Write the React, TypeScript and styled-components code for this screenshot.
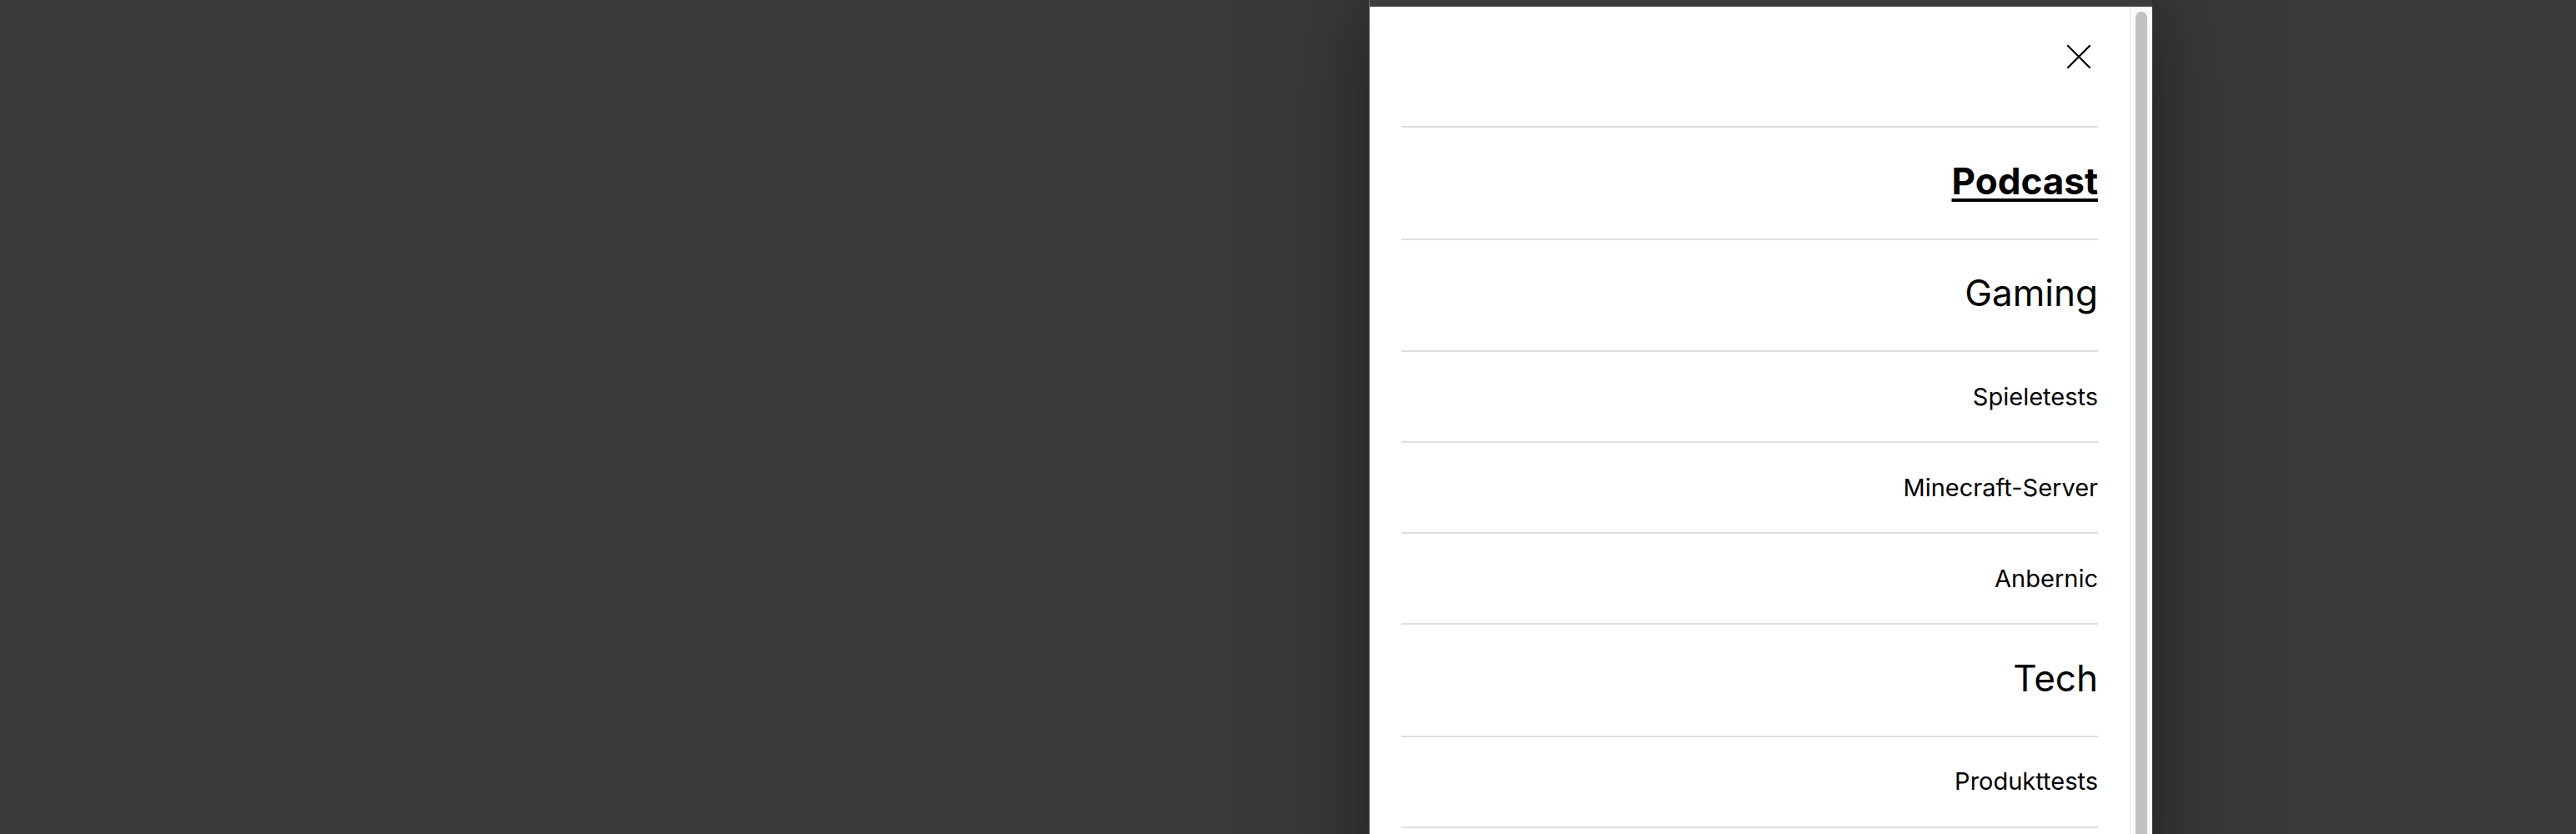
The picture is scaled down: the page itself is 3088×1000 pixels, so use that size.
import React from "react";
import styled, { createGlobalStyle } from "styled-components";

const GlobalStyle = createGlobalStyle`
  *, *::before, *::after { box-sizing: border-box; }
  html, body { margin: 0; padding: 0; }
  body {
    background: #3a3a3a;
    font-family: Inter, "Noto Sans", "DejaVu Sans", sans-serif;
    color: #000;
  }
`;

const Page = styled.div`
  height: 100vh;
  overflow: hidden;
  display: flex;
  justify-content: flex-end;
  align-items: flex-start;
  padding-right: 508px;
  background: #3a3a3a;
`;

const Drawer = styled.aside`
  width: 939px;
  height: 1100px;
  display: flex;
  flex-direction: column;
  background: #fff;
  border-left: 1px solid #6c6c6c;
  box-shadow: 0 0 110px rgba(0, 0, 0, 0.5);
`;

const TopStrip = styled.div`
  flex: 0 0 8px;
  background: #3c3c3c;
`;

const DrawerBody = styled.div`
  flex: 1 1 auto;
  display: flex;
  min-height: 0;
`;

const Content = styled.div`
  flex: 1 1 auto;
  min-width: 0;
  overflow: hidden;
  padding: 0 38px;
  background: #fff;
`;

const ScrollTrack = styled.div`
  flex: 0 0 27px;
  display: flex;
  padding: 6px 6px 0 6px;
  background: #fafafa;
  border-left: 1px solid #e6e6e6;
`;

const ScrollThumb = styled.div`
  flex: 1 1 auto;
  background: #c1c1c1;
  border-radius: 7px;
`;

const Header = styled.div`
  height: 143px;
  display: flex;
  justify-content: flex-end;
  align-items: flex-start;
  padding-top: 37px;
`;

const CloseButton = styled.button`
  width: 46px;
  height: 46px;
  display: flex;
  align-items: center;
  justify-content: center;
  padding: 0;
  margin: 0;
  border: none;
  background: transparent;
  cursor: pointer;
  color: #000;
`;

const NavList = styled.ul`
  list-style: none;
  margin: 0;
  padding: 0;
  border-bottom: 2px solid #dedede;
`;

const NavItem = styled.li<{ $level: "main" | "sub" }>`
  border-top: 2px solid #dedede;
  min-height: ${(p) => (p.$level === "main" ? "134.5px" : "109px")};
  display: flex;
  align-items: center;
  justify-content: flex-end;
  padding-bottom: ${(p) => (p.$level === "main" ? "4px" : "0")};
`;

const NavLink = styled.a<{ $level: "main" | "sub"; $active?: boolean }>`
  color: #000;
  text-decoration: ${(p) => (p.$active ? "underline" : "none")};
  text-decoration-thickness: 3.5px;
  text-underline-offset: 5px;
  font-size: ${(p) => (p.$level === "main" ? "44px" : "29px")};
  font-weight: ${(p) => (p.$active ? 700 : 400)};
  line-height: 1.21;
  text-align: right;
`;

type Item = { label: string; level: "main" | "sub"; active?: boolean };

const items: Item[] = [
  { label: "Podcast", level: "main", active: true },
  { label: "Gaming", level: "main" },
  { label: "Spieletests", level: "sub" },
  { label: "Minecraft-Server", level: "sub" },
  { label: "Anbernic", level: "sub" },
  { label: "Tech", level: "main" },
  { label: "Produkttests", level: "sub" },
];

const CloseIcon = () => (
  <svg width="28" height="28" viewBox="0 0 28 28" fill="none" aria-hidden="true">
    <path d="M1 1 L27 27 M27 1 L1 27" stroke="#000" strokeWidth="2.2" strokeLinecap="round" />
  </svg>
);

export default function App() {
  return (
    <>
      <GlobalStyle />
      <Page>
        <Drawer>
          <TopStrip />
          <DrawerBody>
            <Content>
              <Header>
                <CloseButton aria-label="Menü schließen">
                  <CloseIcon />
                </CloseButton>
              </Header>
              <nav>
                <NavList>
                  {items.map((it) => (
                    <NavItem key={it.label} $level={it.level}>
                      <NavLink href="#" $level={it.level} $active={it.active}>
                        {it.label}
                      </NavLink>
                    </NavItem>
                  ))}
                </NavList>
              </nav>
            </Content>
            <ScrollTrack>
              <ScrollThumb />
            </ScrollTrack>
          </DrawerBody>
        </Drawer>
      </Page>
    </>
  );
}
